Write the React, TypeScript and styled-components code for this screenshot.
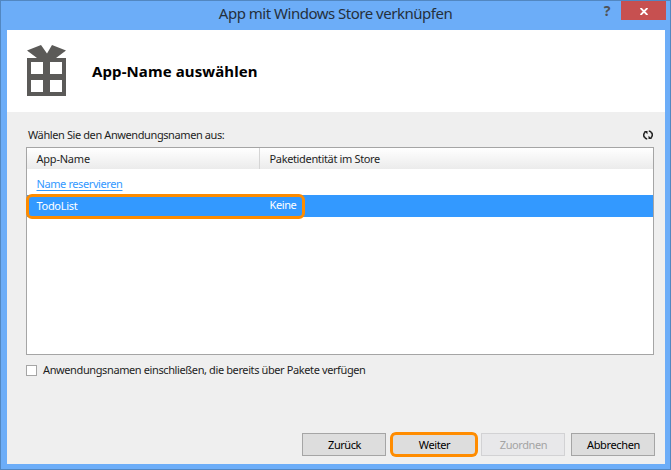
import React from 'react';
import styled, { createGlobalStyle } from 'styled-components';

const GlobalStyle = createGlobalStyle`
  * { box-sizing: border-box; }
  body { margin: 0; background: #6cadf8; font-family: "Noto Sans", "Open Sans", sans-serif; }
`;

const Window = styled.div`
  width: 671px;
  height: 470px;
  display: flex;
  flex-direction: column;
  background: #6cadf8;
  border: 1px solid #5287c1;
  padding: 0 5px 5px 6px;
  font-size: 11px;
  line-height: 16px;
  color: #1e1e1e;
  overflow: hidden;
`;

const TitleBar = styled.header`
  height: 29px;
  flex: none;
  display: grid;
  grid-template-columns: 1fr auto 1fr;
  align-items: start;
  margin-right: -1px;
`;

const Title = styled.h1`
  grid-column: 2;
  margin: 2px 1px 0 -1px;
  font-weight: 400;
  font-size: 15px;
  line-height: 20px;
  letter-spacing: -0.49px;
  color: #25303c;
  white-space: nowrap;
`;

const Controls = styled.div`
  display: flex;
  justify-content: flex-end;
`;

const Help = styled.button`
  border: 0;
  padding: 0;
  width: 28px;
  height: 20px;
  background: none;
  color: #4f5357;
  font: bold 14px/20px "Noto Sans", sans-serif;
`;

const Close = styled.button`
  border: 0;
  padding: 0;
  width: 45px;
  height: 19px;
  display: flex;
  align-items: center;
  justify-content: center;
  background: #c75050;
`;

const CloseGlyph = styled.svg`
  display: block;
  margin-top: 1px;
  margin-left: 1px;
`;

const Client = styled.main`
  flex: 1;
  display: flex;
  flex-direction: column;
  background: #efefef;
  width: 658px;
`;

const Banner = styled.section`
  height: 82px;
  flex: none;
  display: flex;
  gap: 26px;
  padding: 15px 20px;
  background: #fff;
`;

const Heading = styled.h2`
  margin: 15px 0 0;
  font-size: 15px;
  line-height: 22px;
  font-weight: 700;
  letter-spacing: 0.1px;
  color: #000;
  white-space: nowrap;
`;

const Content = styled.section`
  flex: 1;
  display: flex;
  flex-direction: column;
  padding: 0 10px 8px 19px;
`;

const Caption = styled.div`
  height: 35px;
  padding: 15px 2px 0 2px;
  display: flex;
  justify-content: space-between;
`;

const Text = styled.span<{ $spacing?: number }>`
  letter-spacing: ${(p) => p.$spacing ?? -0.4}px;
  white-space: nowrap;
`;

const List = styled.div`
  height: 208px;
  width: 628px;
  background: #fff;
  border: 1px solid #a5a5a5;
`;

const Row = styled.div`
  display: grid;
  grid-template-columns: 233px 1fr;
`;

const HeadRow = styled(Row)`
  height: 21px;
  background: linear-gradient(#fff, #ebebeb);
`;

const Cell = styled.div<{ $lift?: number }>`
  padding: ${(p) => 3 - (p.$lift ?? 0)}px 0 0 9.5px;
`;

const HeadCell = styled(Cell)<{ $divider?: boolean }>`
  border-right: ${(p) => (p.$divider ? '1px solid #d5d5d5' : '0')};
`;

const LinkRow = styled(Row)`
  height: 26px;
  padding-top: 4px;
`;

const Link = styled.a`
  color: #3399ff;
  text-decoration: underline;
  text-underline-offset: 2px;
  text-decoration-thickness: 1px;
`;

const SelectedRow = styled(Row)`
  position: relative;
  height: 22px;
  background: #3399ff;
  color: #fff;
`;

const Highlight = styled.span`
  position: absolute;
  inset: -1px auto -2px -1px;
  width: 279px;
  border: 3px solid #ff8c00;
  border-radius: 6px;
`;

const CheckLabel = styled.label`
  display: flex;
  gap: 6px;
  margin-top: 7px;
`;

const CheckBox = styled.span`
  width: 11px;
  height: 11px;
  margin-top: 3px;
  background: #fff;
  border: 1px solid #a5a5a5;
`;

const Footer = styled.footer`
  margin-top: auto;
  display: grid;
  grid-template-columns: 90px 89px 90px 84px;
  justify-content: end;
`;

const Button = styled.button<{ $disabled?: boolean; $marked?: boolean }>`
  position: relative;
  width: 84px;
  height: 23px;
  padding: 0 0 0 1px;
  background: ${(p) => (p.$disabled ? '#e8e8ea' : '#dddddd')};
  border: 1px solid ${(p) => (p.$disabled ? '#d2d2d4' : '#a5a5a5')};
  color: ${(p) => (p.$disabled ? '#a4a4a4' : '#000')};
  font: 11px/20px "Noto Sans", sans-serif;
  &::after {
    content: "";
    display: ${(p) => (p.$marked ? 'block' : 'none')};
    position: absolute;
    inset: -2px -3px -2px -3px;
    border: 3px solid #ff8c00;
    border-radius: 6px;
  }
`;

const Gift = () => (
  <svg width="39" height="51" viewBox="0 0 39 51" fill="#5b5a58">
    <path d="M0 5.5 14 0l6 8.5L25 0l14 5.5L29 13h10v38H0V13h10ZM4 17v12h12V17Zm19 0v12h12V17ZM4 35v12h12V35Zm19 0v12h12V35Z" fillRule="evenodd" />
  </svg>
);

const RefreshIcon = styled.svg`
  display: block;
  margin-top: 3px;
`;

const Refresh = () => (
  <RefreshIcon width="10" height="10" viewBox="0 0 10 10" fill="none" stroke="#222" strokeWidth="1.5">
    <path d="M1.2 7.2C.4 5.4.7 3.3 2.3 2M8.8 2.8C9.6 4.6 9.3 6.7 7.7 8" />
    <path d="M1.2 6.6Q2 8.8 4.2 9M8.8 3.4Q8 1.2 5.8 1" />
    <path d="M.9.9h3.6v3.4ZM9.1 9.1H5.5V5.7Z" fill="#222" stroke="none" />
  </RefreshIcon>
);

export default function App() {
  return (
    <>
      <GlobalStyle />
      <Window>
        <TitleBar>
          <Title>App mit Windows Store verknüpfen</Title>
          <Controls>
            <Help>?</Help>
            <Close aria-label="Schließen">
              <CloseGlyph width="8" height="7" viewBox="0 0 8 7" stroke="#fff" strokeWidth="1.8">
                <path d="m.6 0 6.8 7M7.4 0 .6 7" />
              </CloseGlyph>
            </Close>
          </Controls>
        </TitleBar>
        <Client>
          <Banner>
            <Gift />
            <Heading>App-Name auswählen</Heading>
          </Banner>
          <Content>
            <Caption>
              <Text>Wählen Sie den Anwendungsnamen aus:</Text>
              <Refresh />
            </Caption>
            <List>
              <HeadRow>
                <HeadCell $divider><Text $spacing={-0.22}>App-Name</Text></HeadCell>
                <HeadCell><Text $spacing={-0.35}>Paketidentität im Store</Text></HeadCell>
              </HeadRow>
              <LinkRow>
                <Cell><Link><Text>Name reservieren</Text></Link></Cell>
              </LinkRow>
              <SelectedRow>
                <Cell><Text $spacing={-0.3}>TodoList</Text></Cell>
                <Cell $lift={1}><Text>Keine</Text></Cell>
                <Highlight />
              </SelectedRow>
            </List>
            <CheckLabel>
              <CheckBox />
              <Text $spacing={-0.39}>Anwendungsnamen einschließen, die bereits über Pakete verfügen</Text>
            </CheckLabel>
            <Footer>
              <Button><Text $spacing={-0.45}>Zurück</Text></Button>
              <Button $marked><Text>Weiter</Text></Button>
              <Button $disabled><Text>Zuordnen</Text></Button>
              <Button><Text $spacing={-0.35}>Abbrechen</Text></Button>
            </Footer>
          </Content>
        </Client>
      </Window>
    </>
  );
}
